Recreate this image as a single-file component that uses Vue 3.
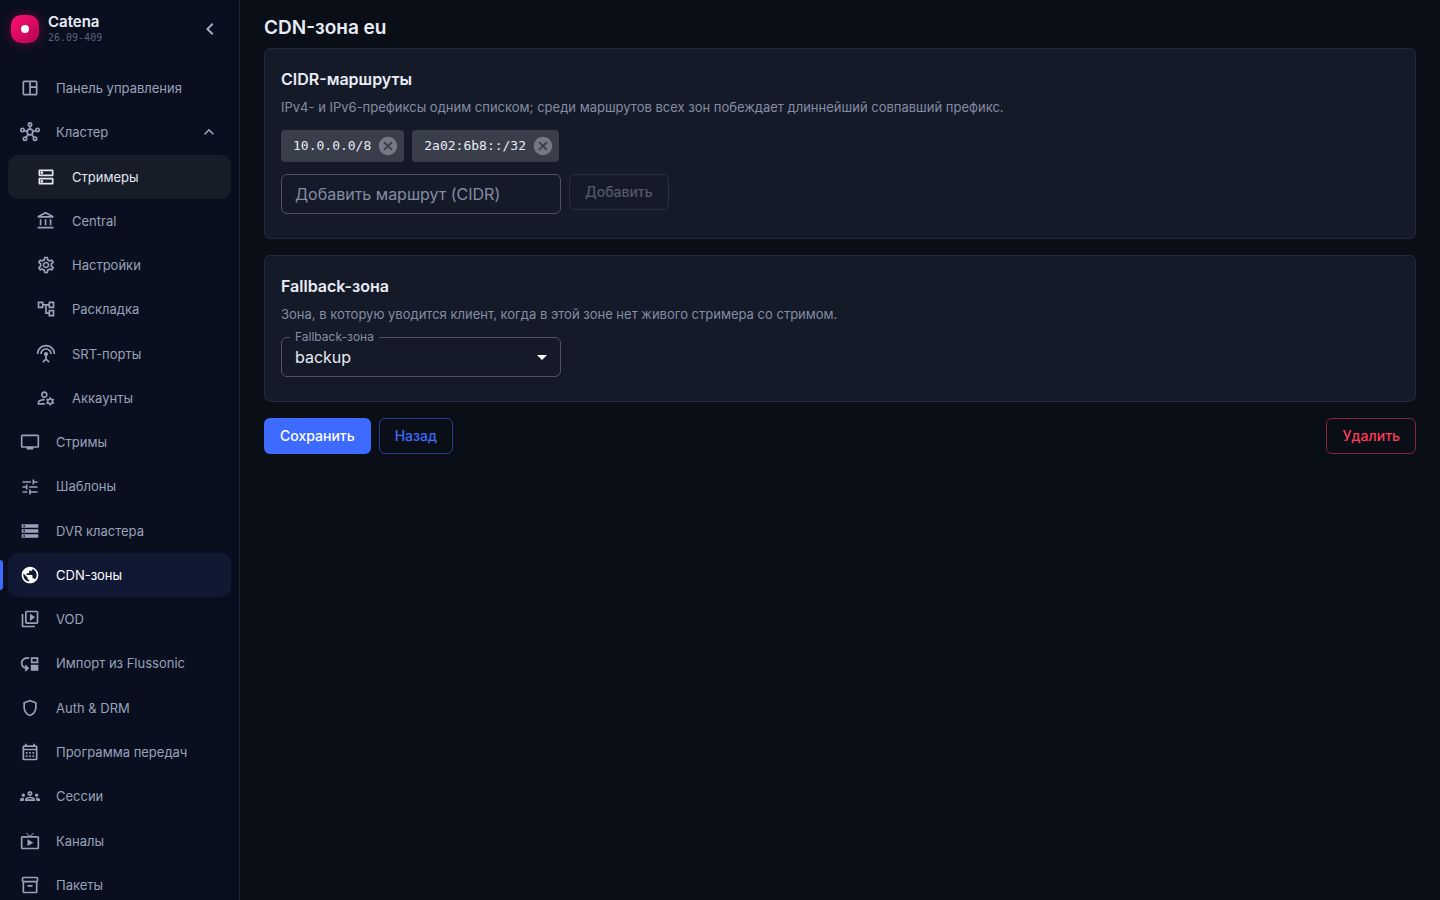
<script setup>
import { ref } from 'vue'

const icons = {
  dashboard: 'M19 3H5c-1.1 0-2 .9-2 2v14c0 1.1.9 2 2 2h14c1.1 0 2-.9 2-2V5c0-1.1-.9-2-2-2M5 19V5h6v14zm14 0h-6v-7h6zm0-9h-6V5h6z',
  servers: 'M19 15v4H5v-4h14m1-2H4c-.55 0-1 .45-1 1v6c0 .55.45 1 1 1h16c.55 0 1-.45 1-1v-6c0-.55-.45-1-1-1M7 18.5c-.82 0-1.5-.67-1.5-1.5s.68-1.5 1.5-1.5 1.5.67 1.5 1.5-.67 1.5-1.5 1.5M19 5v4H5V5h14m1-2H4c-.55 0-1 .45-1 1v6c0 .55.45 1 1 1h16c.55 0 1-.45 1-1V4c0-.55-.45-1-1-1M7 8.5c-.82 0-1.5-.67-1.5-1.5S6.18 5.5 7 5.5s1.5.68 1.5 1.5S7.83 8.5 7 8.5',
  central: 'M6.5 10h-2v7h2zm6 0h-2v7h2zm8.5 9H2v2h19zm-2.5-9h-2v7h2zm-7-6.74L16.71 6H6.29zm0-2.26L2 6v2h19V6z',
  settings: 'M19.43 12.98c.04-.32.07-.64.07-.98s-.03-.66-.07-.98l2.11-1.65c.19-.15.24-.42.12-.64l-2-3.46c-.09-.16-.26-.25-.44-.25-.06 0-.12.01-.17.03l-2.49 1c-.52-.4-1.08-.73-1.69-.98l-.38-2.65C14.46 2.18 14.25 2 14 2h-4c-.25 0-.46.18-.49.42l-.38 2.65c-.61.25-1.17.59-1.69.98l-2.49-1c-.06-.02-.12-.03-.18-.03-.17 0-.34.09-.43.25l-2 3.46c-.13.22-.07.49.12.64l2.11 1.65c-.04.32-.07.65-.07.98s.03.66.07.98l-2.11 1.65c-.19.15-.24.42-.12.64l2 3.46c.09.16.26.25.44.25.06 0 .12-.01.17-.03l2.49-1c.52.4 1.08.73 1.69.98l.38 2.65c.03.24.24.42.49.42h4c.25 0 .46-.18.49-.42l.38-2.65c.61-.25 1.17-.59 1.69-.98l2.49 1c.06.02.12.03.18.03.17 0 .34-.09.43-.25l2-3.46c.12-.22.07-.49-.12-.64zm-1.98-1.71c.04.31.05.52.05.73s-.02.43-.05.73l-.14 1.13.89.7 1.08.84-.7 1.21-1.27-.51-1.04-.42-.9.68c-.43.32-.84.56-1.25.73l-1.06.43-.16 1.13-.2 1.35h-1.4l-.19-1.35-.16-1.13-1.06-.43c-.43-.18-.83-.41-1.23-.71l-.91-.7-1.06.43-1.27.51-.7-1.21 1.08-.84.89-.7-.14-1.13c-.03-.31-.05-.54-.05-.74s.02-.43.05-.73l.14-1.13-.89-.7-1.08-.84.7-1.21 1.27.51 1.04.42.9-.68c.43-.32.84-.56 1.25-.73l1.06-.43.16-1.13.2-1.35h1.39l.19 1.35.16 1.13 1.06.43c.43.18.83.41 1.23.71l.91.7 1.06-.43 1.27-.51.7 1.21-1.07.85-.89.7zM12 8c-2.21 0-4 1.79-4 4s1.79 4 4 4 4-1.79 4-4-1.79-4-4-4m0 6c-1.1 0-2-.9-2-2s.9-2 2-2 2 .9 2 2-.9 2-2 2',
  tree: 'M22 11V3h-7v3H9V3H2v8h7V8h2v10h4v3h7v-8h-7v3h-2V8h2v3zM7 9H4V5h3zm10 6h3v4h-3zm0-10h3v4h-3z',
  antenna: 'M12 5c-3.87 0-7 3.13-7 7h2c0-2.76 2.24-5 5-5s5 2.24 5 5h2c0-3.87-3.13-7-7-7m1 9.29c.88-.39 1.5-1.26 1.5-2.29 0-1.38-1.12-2.5-2.5-2.5S9.5 10.62 9.5 12c0 1.02.62 1.9 1.5 2.29v3.3L7.59 21 9 22.41l3-3 3 3L16.41 21 13 17.59zM12 1C5.93 1 1 5.93 1 12h2c0-4.97 4.03-9 9-9s9 4.03 9 9h2c0-6.07-4.93-11-11-11',
  accounts: 'M4 18v-.65c0-.34.16-.66.41-.81C6.1 15.53 8.03 15 10 15c.03 0 .05 0 .08.01.1-.7.3-1.37.59-1.98-.22-.02-.44-.03-.67-.03-2.42 0-4.68.67-6.61 1.82-.88.52-1.39 1.5-1.39 2.53V20h9.26c-.42-.6-.75-1.28-.97-2zM10 12c2.21 0 4-1.79 4-4s-1.79-4-4-4-4 1.79-4 4 1.79 4 4 4m0-6c1.1 0 2 .9 2 2s-.9 2-2 2-2-.9-2-2 .9-2 2-2m10.75 10c0-.22-.03-.42-.06-.63l1.14-1.01-1-1.73-1.45.49c-.32-.27-.68-.48-1.08-.63L18 11h-2l-.3 1.49c-.4.15-.76.36-1.08.63l-1.45-.49-1 1.73 1.14 1.01c-.03.21-.06.41-.06.63s.03.42.06.63l-1.14 1.01 1 1.73 1.45-.49c.32.27.68.48 1.08.63L16 21h2l.3-1.49c.4-.15.76-.36 1.08-.63l1.45.49 1-1.73-1.14-1.01c.03-.21.06-.41.06-.63M17 18c-1.1 0-2-.9-2-2s.9-2 2-2 2 .9 2 2-.9 2-2 2',
  screen: 'M21 3H3c-1.1 0-2 .9-2 2v12c0 1.1.9 2 2 2h5v2h8v-2h5c1.1 0 1.99-.9 1.99-2L23 5c0-1.1-.9-2-2-2m0 14H3V5h18z',
  tune: 'M3 17v2h6v-2zM3 5v2h10V5zm10 16v-2h8v-2h-8v-2h-2v6zM7 9v2H3v2h4v2h2V9zm14 4v-2H11v2zm-6-4h2V7h4V5h-4V3h-2z',
  storage: 'M2 20h20v-4H2zm2-3h2v2H4zM2 4v4h20V4zm4 3H4V5h2zm-4 7h20v-4H2zm2-3h2v2H4z',
  globe: 'M12 2C6.48 2 2 6.48 2 12s4.48 10 10 10 10-4.48 10-10S17.52 2 12 2m-1 17.93c-3.95-.49-7-3.85-7-7.93 0-.62.08-1.21.21-1.79L9 15v1c0 1.1.9 2 2 2zm6.9-2.54c-.26-.81-1-1.39-1.9-1.39h-1v-3c0-.55-.45-1-1-1H8v-2h2c.55 0 1-.45 1-1V7h2c1.1 0 2-.9 2-2v-.41c2.93 1.19 5 4.06 5 7.41 0 2.08-.8 3.97-2.1 5.39',
  library: 'M4 6H2v14c0 1.1.9 2 2 2h14v-2H4zm16-4H8c-1.1 0-2 .9-2 2v12c0 1.1.9 2 2 2h12c1.1 0 2-.9 2-2V4c0-1.1-.9-2-2-2m0 14H8V4h12zM12 5.5v9l6-4.5z',
  move: 'M3 11c0 2.45 1.76 4.47 4.08 4.91l-1.49-1.49L7 13l4 4.01L7 21l-1.41-1.41 1.58-1.58v-.06C3.7 17.54 1 14.58 1 11c0-3.87 3.13-7 7-7h3v2H8c-2.76 0-5 2.24-5 5M22 11V4h-9v7zm-2-2h-5V6h5zM13 13h9v7h-9z',
  shield: 'M12 2 4 5v6.09c0 5.05 3.41 9.76 8 10.91 4.59-1.15 8-5.86 8-10.91V5zm6 9.09c0 4-2.55 7.7-6 8.83-3.45-1.13-6-4.82-6-8.83v-4.7l6-2.25 6 2.25z',
  calendar: 'M19 4h-1V2h-2v2H8V2H6v2H5c-1.11 0-1.99.9-1.99 2L3 20c0 1.1.89 2 2 2h14c1.1 0 2-.9 2-2V6c0-1.1-.9-2-2-2m0 16H5V10h14zm0-12H5V6h14zM9 14H7v-2h2zm4 0h-2v-2h2zm4 0h-2v-2h2zm-8 4H7v-2h2zm4 0h-2v-2h2zm4 0h-2v-2h2z',
  groups: 'M4 13c1.1 0 2-.9 2-2s-.9-2-2-2-2 .9-2 2 .9 2 2 2m1.13 1.1c-.37-.06-.74-.1-1.13-.1-.99 0-1.93.21-2.78.58C.48 14.9 0 15.62 0 16.43V18h4.5v-1.61c0-.83.23-1.61.63-2.29M20 13c1.1 0 2-.9 2-2s-.9-2-2-2-2 .9-2 2 .9 2 2 2m4 3.43c0-.81-.48-1.53-1.22-1.85-.85-.37-1.79-.58-2.78-.58-.39 0-.76.04-1.13.1.4.68.63 1.46.63 2.29V18H24zm-7.76-2.78c-1.17-.52-2.61-.9-4.24-.9s-3.07.39-4.24.9C6.68 14.13 6 15.21 6 16.39V18h12v-1.61c0-1.18-.68-2.26-1.76-2.74M8.07 16c.09-.23.13-.39.91-.69.97-.38 1.99-.56 3.02-.56s2.05.18 3.02.56c.77.3.81.46.91.69zM12 8c.55 0 1 .45 1 1s-.45 1-1 1-1-.45-1-1 .45-1 1-1m0-2c-1.66 0-3 1.34-3 3s1.34 3 3 3 3-1.34 3-3-1.34-3-3-3',
  tv: 'M21 6h-7.59l3.29-3.29L16 2l-4 4-4-4-.71.71L10.59 6H3c-1.1 0-2 .89-2 2v12c0 1.1.9 2 2 2h18c1.1 0 2-.9 2-2V8c0-1.11-.9-2-2-2m0 14H3V8h18zM9 10v8l7-4z',
  box: 'M20 2H4c-1 0-2 .9-2 2v3.01c0 .72.43 1.34 1 1.69V20c0 1.1 1.1 2 2 2h14c.9 0 2-.9 2-2V8.7c.57-.35 1-.97 1-1.69V4c0-1.1-1-2-2-2m-1 18H5V9h14zm1-13H4V4h16zM9 12h6v2H9z',
}

const items = [
  { label: 'Панель управления', icon: 'dashboard' },
  { label: 'Кластер', icon: 'hub', group: true },
  { label: 'Стримеры', icon: 'servers', sub: true, hover: true },
  { label: 'Central', icon: 'central', sub: true },
  { label: 'Настройки', icon: 'settings', sub: true },
  { label: 'Раскладка', icon: 'tree', sub: true },
  { label: 'SRT-порты', icon: 'antenna', sub: true },
  { label: 'Аккаунты', icon: 'accounts', sub: true },
  { label: 'Стримы', icon: 'screen' },
  { label: 'Шаблоны', icon: 'tune' },
  { label: 'DVR кластера', icon: 'storage' },
  { label: 'CDN-зоны', icon: 'globe', active: true },
  { label: 'VOD', icon: 'library' },
  { label: 'Импорт из Flussonic', icon: 'move' },
  { label: 'Auth & DRM', icon: 'shield' },
  { label: 'Программа передач', icon: 'calendar' },
  { label: 'Сессии', icon: 'groups' },
  { label: 'Каналы', icon: 'tv' },
  { label: 'Пакеты', icon: 'box' },
]

const open = ref(true)
const routes = ref(['10.0.0.0/8', '2a02:6b8::/32'])
const draft = ref('')
const fallback = ref('backup')

function addRoute() {
  routes.value.push(draft.value.trim())
  draft.value = ''
}
</script>

<template>
  <div class="app">
    <aside class="sidebar">
      <header class="brand">
        <span class="logo"><span class="dot"></span></span>
        <div class="brand-text">
          <span class="name">Catena</span>
          <span class="version">26.09-409</span>
        </div>
        <button class="collapse" type="button" aria-label="Свернуть меню">
          <svg viewBox="0 0 24 24"><path d="M15.41 7.41 14 6l-6 6 6 6 1.41-1.41L10.83 12z" /></svg>
        </button>
      </header>
      <nav class="nav">
        <template v-for="item in items" :key="item.label">
          <component
            :is="item.group ? 'button' : 'a'"
            v-if="open || !item.sub"
            class="item"
            :class="{ sub: item.sub, hover: item.hover, active: item.active }"
            :href="item.group ? undefined : '#'"
            :type="item.group ? 'button' : undefined"
            @click.prevent="item.group && (open = !open)"
          >
            <svg v-if="item.icon === 'hub'" class="icon hub" viewBox="0 0 24 24">
              <circle cx="12" cy="12" r="3.4" />
              <circle cx="12" cy="3" r="2" />
              <circle cx="3" cy="9.5" r="2" />
              <circle cx="21" cy="9.5" r="2" />
              <circle cx="6" cy="20" r="2" />
              <circle cx="18" cy="20" r="2" />
              <path d="M12 5v3.500M5 10.200l3.700 1.200M19 10.200l-3.700 1.200M7.300 18.400l2.600-3.400M16.700 18.400l-2.600-3.400" />
            </svg>
            <svg v-else class="icon" viewBox="0 0 24 24"><path :d="icons[item.icon]" /></svg>
            <span class="label">{{ item.label }}</span>
            <svg v-if="item.group" class="icon" viewBox="0 0 24 24">
              <path d="m12 8-6 6 1.410 1.410L12 10.830l4.590 4.580L18 14z" />
            </svg>
          </component>
        </template>
      </nav>
    </aside>

    <main class="main">
      <h1 class="title">CDN-зона eu</h1>

      <section class="card">
        <h2>CIDR-маршруты</h2>
        <p>IPv4- и IPv6-префиксы одним списком; среди маршрутов всех зон побеждает длиннейший совпавший префикс.</p>
        <div class="chips">
          <span v-for="(route, i) in routes" :key="route" class="chip">
            {{ route }}
            <button type="button" :aria-label="'Удалить ' + route" @click="routes.splice(i, 1)">
              <svg viewBox="0 0 24 24">
                <path d="M12 2C6.470 2 2 6.470 2 12s4.470 10 10 10 10-4.470 10-10S17.530 2 12 2m5 13.590L15.590 17 12 13.410 8.410 17 7 15.590 10.590 12 7 8.410 8.410 7 12 10.590 15.590 7 17 8.410 13.410 12z" />
              </svg>
            </button>
          </span>
        </div>
        <form class="add" @submit.prevent="addRoute">
          <input v-model="draft" class="field" type="text" placeholder="Добавить маршрут (CIDR)" aria-label="Добавить маршрут (CIDR)">
          <button class="btn plain" type="submit" :disabled="!draft.trim()">Добавить</button>
        </form>
      </section>

      <section class="card">
        <h2>Fallback-зона</h2>
        <p>Зона, в которую уводится клиент, когда в этой зоне нет живого стримера со стримом.</p>
        <div class="select">
          <label for="fallback">Fallback-зона</label>
          <select id="fallback" v-model="fallback" class="field">
            <option value="backup">backup</option>
          </select>
          <svg viewBox="0 0 24 24"><path d="m7 10 5 5 5-5z" /></svg>
        </div>
      </section>

      <div class="actions">
        <button class="btn primary" type="button">Сохранить</button>
        <button class="btn outline" type="button">Назад</button>
        <button class="btn danger" type="button">Удалить</button>
      </div>
    </main>
  </div>
</template>

<style>
body {
  margin: 0;
  background: #0a0e17;
}
</style>

<style scoped>
.app {
  display: flex;
  height: 100vh;
  overflow: hidden;
  color: #e8ecf6;
  font-family: Inter, "Noto Sans", sans-serif;
}

.app * {
  box-sizing: border-box;
}

svg {
  display: block;
  fill: currentColor;
}

button {
  font-family: inherit;
  cursor: pointer;
}

.sidebar {
  flex: none;
  width: 240px;
  overflow: hidden;
  border-right: 1px solid #1d2230;
  background: #090f1e;
}

.brand {
  display: flex;
  align-items: center;
  gap: 9px;
  height: 58px;
  padding: 0 17px 0 11px;
}

.logo {
  display: grid;
  place-items: center;
  width: 28px;
  height: 28px;
  border-radius: 10px;
  background: linear-gradient(135deg, #ff1272, #b4044f);
  box-shadow: 0 0 12px rgba(255, 10, 100, 0.35);
}

.dot {
  width: 8px;
  height: 8px;
  border-radius: 50%;
  background: #fff;
}

.brand-text {
  display: flex;
  flex: 1;
  flex-direction: column;
}

.name {
  font-size: 15px;
  font-weight: 600;
  line-height: 18px;
}

.version {
  color: #59617a;
  font-family: "DejaVu Sans Mono", monospace;
  font-size: 10px;
  line-height: 14px;
}

.collapse {
  padding: 0;
  border: 0;
  background: none;
  color: #a3abc2;
}

.collapse svg {
  width: 24px;
  height: 24px;
}

.nav {
  display: flex;
  flex-direction: column;
  padding: 8px;
}

.item {
  position: relative;
  display: flex;
  flex: none;
  align-items: center;
  gap: 16px;
  padding: 12px;
  border: 0;
  border-radius: 10px;
  background: none;
  color: #99a2ba;
  font-size: 13px;
  line-height: 1.56;
  text-align: left;
  text-decoration: none;
}

.sub {
  padding-left: 28px;
}

.hover {
  background: #171c29;
  color: #e0e5f0;
}

.active {
  background: #101833;
  color: #fff;
}

.active::before {
  content: "";
  position: absolute;
  top: 7px;
  bottom: 7px;
  left: -8px;
  width: 3px;
  border-radius: 0 3px 3px 0;
  background: #3d6bff;
}

.label {
  flex: 1;
}

.icon {
  width: 20px;
  height: 20px;
}

.hub {
  fill: none;
  stroke: currentColor;
  stroke-width: 2;
}

.main {
  flex: 1;
  min-width: 0;
  padding: 8px 24px;
  overflow: auto;
}

.title {
  margin: 0;
  font-size: 19px;
  font-weight: 600;
  line-height: 40px;
}

.card {
  margin-bottom: 16px;
  padding: 16px 16px 24px;
  border: 1px solid #222a3c;
  border-radius: 6px;
  background: #151a29;
}

.card h2 {
  margin: 0 0 4px;
  font-size: 16px;
  font-weight: 600;
  line-height: 28px;
}

.card p {
  margin: 0 0 12px;
  color: #848da3;
  font-size: 13px;
  line-height: 21px;
}

.chips {
  display: flex;
  flex-wrap: wrap;
  gap: 8px;
  margin-bottom: 12px;
}

.chip {
  display: flex;
  align-items: center;
  gap: 6px;
  height: 32px;
  padding: 0 5px 0 12px;
  border-radius: 4px;
  background: #393e4a;
  font-family: "DejaVu Sans Mono", monospace;
  font-size: 13px;
  line-height: 20px;
}

.chip button {
  padding: 0;
  border: 0;
  background: none;
  color: #747985;
}

.chip svg {
  width: 22px;
  height: 22px;
}

.add {
  display: flex;
  align-items: flex-start;
  gap: 8px;
}

.field {
  width: 280px;
  height: 40px;
  padding: 0 13px;
  border: 1px solid #50535f;
  border-radius: 6px;
  background: transparent;
  color: #e8ecf6;
  font-family: inherit;
  font-size: 16px;
}

.field::placeholder {
  color: #848da3;
  opacity: 1;
}

.select {
  position: relative;
  width: 280px;
}

.select .field {
  display: block;
  appearance: none;
  line-height: 24px;
}

.select label {
  position: absolute;
  top: -8px;
  left: 9px;
  padding: 0 5px;
  background: #151a29;
  color: #848da3;
  font-size: 12px;
  line-height: 16px;
}

.select svg {
  position: absolute;
  top: 8px;
  right: 7px;
  width: 24px;
  height: 24px;
  color: #fff;
  pointer-events: none;
}

.btn {
  padding: 5px 15px;
  border: 1px solid transparent;
  border-radius: 6px;
  background: none;
  font-size: 14px;
  font-weight: 500;
  line-height: 24px;
}

.plain {
  border-color: #2b303e;
  color: #545966;
}

.actions {
  display: flex;
  gap: 8px;
}

.primary {
  background: #3d6bff;
  color: #fff;
}

.outline {
  border-color: #243e90;
  color: #3d6bff;
}

.danger {
  margin-left: auto;
  border-color: #8c2539;
  color: #ff3b57;
}
</style>
